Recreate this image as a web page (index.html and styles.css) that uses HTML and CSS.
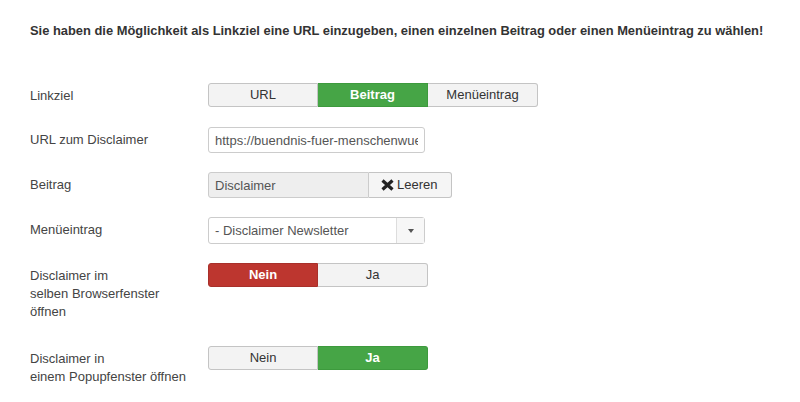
FILE: index.html
```html
<!DOCTYPE html>
<html lang="de">
<head>
  <meta charset="UTF-8">
  <meta name="viewport" content="width=device-width, initial-scale=1.0">
  <title>Disclaimer Einstellungen</title>
  <link rel="stylesheet" href="styles.css">
</head>
<body>
  <div class="container">
    <p class="intro">Sie haben die Möglichkeit als Linkziel eine URL einzugeben, einen einzelnen Beitrag oder einen Menüeintrag zu wählen!</p>

    <form class="settings">
      <div class="control-group">
        <label class="control-label">Linkziel</label>
        <div class="controls">
          <div class="btn-group">
            <span class="btn">URL</span>
            <span class="btn btn-success">Beitrag</span>
            <span class="btn">Menüeintrag</span>
          </div>
        </div>
      </div>

      <div class="control-group">
        <label class="control-label">URL zum Disclaimer</label>
        <div class="controls">
          <input class="text-input" type="text" value="https://buendnis-fuer-menschenwuerde.de/disclaimer">
        </div>
      </div>

      <div class="control-group">
        <label class="control-label">Beitrag</label>
        <div class="controls">
          <div class="input-append">
            <input class="text-input readonly" type="text" value="Disclaimer" readonly>
            <span class="btn-clear">
              <svg class="icon-remove" width="13" height="12" viewBox="0 0 13 12">
                <path d="M1.5 1.5 L11.5 10.5 M11.5 1.5 L1.5 10.5" stroke="#222" stroke-width="3.2" stroke-linecap="butt"/>
              </svg>
              Leeren
            </span>
          </div>
        </div>
      </div>

      <div class="control-group">
        <label class="control-label">Menüeintrag</label>
        <div class="controls">
          <div class="chzn-select">
            <span class="chzn-value">- Disclaimer Newsletter</span>
            <span class="chzn-arrow"><span class="caret"></span></span>
          </div>
        </div>
      </div>

      <div class="control-group spaced">
        <label class="control-label">Disclaimer im<br>selben Browserfenster<br>öffnen</label>
        <div class="controls">
          <div class="btn-group">
            <span class="btn btn-danger">Nein</span>
            <span class="btn">Ja</span>
          </div>
        </div>
      </div>

      <div class="control-group">
        <label class="control-label">Disclaimer in<br>einem Popupfenster öffnen</label>
        <div class="controls">
          <div class="btn-group">
            <span class="btn">Nein</span>
            <span class="btn btn-success">Ja</span>
          </div>
        </div>
      </div>
    </form>
  </div>
</body>
</html>
```

FILE: styles.css
```css
* {
  box-sizing: border-box;
}

body {
  margin: 0;
  background-color: #fff;
  font-family: "Liberation Sans", Arial, sans-serif;
  font-size: 13px;
  line-height: 18px;
  color: #333;
}

.container {
  padding: 22px 30px 0 30px;
}

.intro {
  margin: 0 0 43px 0;
  font-weight: bold;
  font-size: 12.9px;
  color: #333;
}

.control-group {
  display: flex;
  margin-bottom: 19px;
}

.control-group.spaced {
  margin-bottom: 22px;
}

.control-label {
  width: 178px;
  flex-shrink: 0;
  padding: 4px 0 3px 0;
  color: #444;
}

.controls {
  flex: 1;
}

.btn-group {
  display: flex;
}

.btn {
  width: 110px;
  height: 24px;
  line-height: 22px;
  text-align: center;
  background-color: #f3f3f3;
  border: 1px solid #c4c4c4;
  border-left-width: 0;
  color: #333;
}

.btn:first-child {
  border-left-width: 1px;
  border-radius: 3px 0 0 3px;
}

.btn:last-child {
  border-radius: 0 3px 3px 0;
}

.btn-success {
  background-color: #46a546;
  border-color: #3d9a3d;
  color: #fff;
  font-weight: bold;
}

.btn-danger {
  background-color: #bd362f;
  border-color: #a8302a;
  color: #fff;
  font-weight: bold;
}

.text-input {
  width: 217px;
  height: 26px;
  padding: 3px 6px;
  border: 1px solid #ccc;
  border-radius: 3px;
  font-family: inherit;
  font-size: 13px;
  color: #555;
  background-color: #fff;
}

.input-append {
  display: flex;
}

.text-input.readonly {
  width: 161px;
  background-color: #eee;
  border-radius: 3px 0 0 3px;
  color: #555;
}

.btn-clear {
  display: flex;
  align-items: center;
  gap: 3px;
  height: 26px;
  width: 83px;
  padding: 0 0 0 12px;
  background-color: #f5f5f5;
  border: 1px solid #c4c4c4;
  border-left-width: 0;
  border-radius: 0 3px 3px 0;
  color: #333;
}

.chzn-select {
  display: flex;
  width: 217px;
  height: 27px;
  border: 1px solid #ccc;
  border-radius: 3px;
  background-color: #fff;
}

.chzn-value {
  flex: 1;
  padding: 4px 6px;
  color: #555;
}

.chzn-arrow {
  width: 28px;
  display: flex;
  align-items: center;
  justify-content: center;
  border-left: 1px solid #ddd;
  background-color: #f7f7f7;
}

.caret {
  width: 0;
  height: 0;
  border-left: 3px solid transparent;
  border-right: 3px solid transparent;
  border-top: 4px solid #555;
}
```
